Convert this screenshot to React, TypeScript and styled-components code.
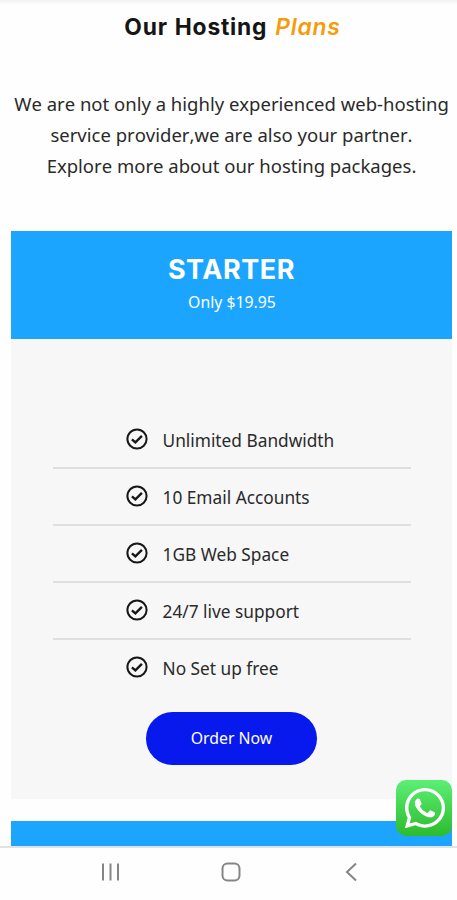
import React from 'react';
import styled, { createGlobalStyle } from 'styled-components';
import { FaWhatsapp } from 'react-icons/fa';

const GlobalStyle = createGlobalStyle`
  * { box-sizing: border-box; }
  body {
    margin: 0;
    background: #fefefe;
    color: #2a2a2a;
    font-family: "Noto Sans", sans-serif;
  }
`;

const Screen = styled.div`
  position: relative;
  display: flex;
  flex-direction: column;
  width: 457px;
  height: 900px;
  overflow: hidden;
`;

const Page = styled.main`
  flex: none;
  height: 846px;
  overflow: hidden;
  padding: 0 5px 0 11px;
  background: linear-gradient(#f1f1f1, #fefefe 5px);
`;

const Title = styled.h1`
  margin: 0;
  padding: 11px 0 0 2px;
  height: 88px;
  text-align: center;
  white-space: nowrap;
  font: 700 22.8px/32px Inter, sans-serif;
  letter-spacing: 0.8px;
  word-spacing: 0.8px;
  color: #151515;
`;

const Accent = styled.em`
  margin-left: 1px;
  font-weight: 600;
  color: #f59c0b;
`;

const Intro = styled.p`
  margin: 0 -6px;
  height: 143px;
  text-align: center;
  white-space: nowrap;
  font-size: 18.5px;
  line-height: 31px;
  font-kerning: none;
`;

const PlanHeader = styled.header`
  height: 108px;
  padding-top: 22px;
  background: #1ba5ff;
  color: #fff;
  text-align: center;
`;

const PlanName = styled.h2`
  margin: 0;
  font: 700 27px/34px Inter, sans-serif;
  letter-spacing: 0.55px;
`;

const Price = styled.div`
  padding-left: 1px;
  font-size: 15.8px;
  line-height: 31px;
`;

const PlanBody = styled.section`
  display: flex;
  flex-direction: column;
  align-items: center;
  height: 460px;
  margin-bottom: 22px;
  padding-top: 73px;
  background: #f7f7f7;
`;

const Features = styled.ul`
  width: 358px;
  margin: 0;
  padding: 0;
  list-style: none;
`;

const Feature = styled.li`
  display: flex;
  align-items: center;
  gap: 15px;
  height: 57px;
  padding: 0 0 4px 73px;
  font-size: 17.3px;
  white-space: nowrap;

  &:not(:last-child) {
    padding-bottom: 2px;
    border-bottom: 2px solid #dfdfdf;
  }
`;

const FeatureText = styled.span`
  padding-top: 3px;
`;

const OrderButton = styled.button`
  width: 171px;
  height: 53px;
  margin-top: 15px;
  padding: 0;
  border: 0;
  border-radius: 27px;
  background: #0719ed;
  color: #fff;
  font: 400 15.8px/53px "Noto Sans", sans-serif;
`;

const ChatButton = styled.div`
  position: absolute;
  left: 396px;
  top: 780px;
  display: flex;
  align-items: center;
  justify-content: center;
  width: 56px;
  height: 56px;
  padding-left: 2px;
  border-radius: 10px;
  background: linear-gradient(#5bf075, #2dbb2d);
  color: #fff;
`;

const NavBar = styled.nav`
  flex: none;
  display: flex;
  justify-content: space-between;
  align-items: center;
  height: 54px;
  padding: 0 94px 4px 98px;
  border-top: 2px solid #e2e2e4;
  background: #fefefe;
`;

const CheckIcon = () => (
  <svg width="22" height="22" viewBox="0 0 22 22" fill="none" stroke="#171717">
    <circle cx="11" cy="11" r="9.6" strokeWidth="2" />
    <path d="M5.9 11.3 9.4 14.4 15.9 7.8" strokeWidth="2.4" />
  </svg>
);

const navIcons = [
  <path key="recents" d="M5 3.5v17M12.5 3.5v17M20 3.5v17" />,
  <rect key="home" x="3.5" y="3.5" width="17" height="17" rx="5" />,
  <path key="back" d="M17 3.5 8 12l9 8.5" />,
];

const features = [
  'Unlimited Bandwidth',
  '10 Email Accounts',
  '1GB Web Space',
  '24/7 live support',
  'No Set up free',
];

export default function App() {
  return (
    <>
      <GlobalStyle />
      <Screen>
        <Page>
          <Title>Our Hosting <Accent>Plans</Accent></Title>
          <Intro>
            We are not only a highly experienced web-hosting<br />
            service provider,we are also your partner.<br />
            Explore more about our hosting packages.
          </Intro>
          <PlanHeader>
            <PlanName>STARTER</PlanName>
            <Price>Only $19.95</Price>
          </PlanHeader>
          <PlanBody>
            <Features>
              {features.map((text) => (
                <Feature key={text}>
                  <CheckIcon />
                  <FeatureText>{text}</FeatureText>
                </Feature>
              ))}
            </Features>
            <OrderButton>Order Now</OrderButton>
          </PlanBody>
          <PlanHeader />
        </Page>
        <NavBar>
          {navIcons.map((icon) => (
            <svg key={icon.key} width="24" height="24" viewBox="0 0 24 24" fill="none" stroke="#858585" strokeWidth="2">
              {icon}
            </svg>
          ))}
        </NavBar>
        <ChatButton><FaWhatsapp size={46} /></ChatButton>
      </Screen>
    </>
  );
}
